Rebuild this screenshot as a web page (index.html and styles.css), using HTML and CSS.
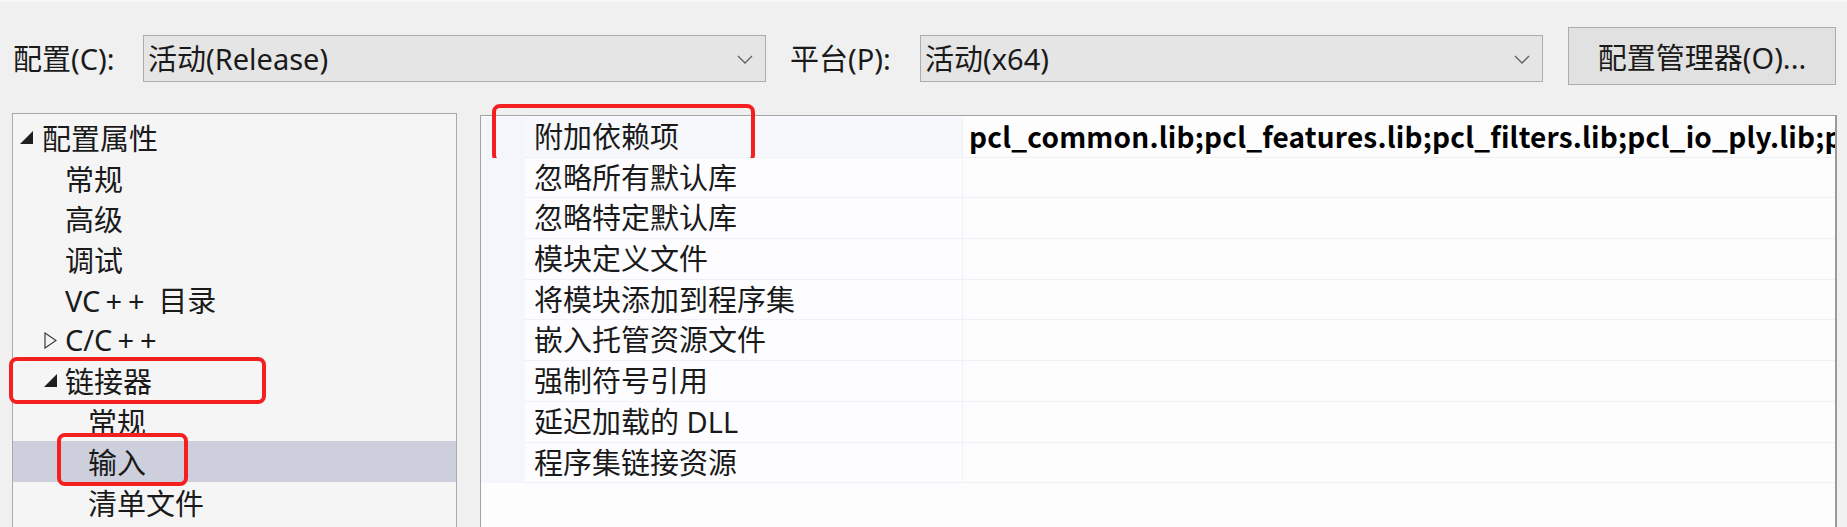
FILE: index.html
```html
<!DOCTYPE html>
<html lang="zh-CN">
<head>
<meta charset="utf-8">
<title>属性页</title>
<link rel="stylesheet" href="styles.css">
</head>
<body>
<div class="page">
  <div class="toolbar">
    <span class="lbl lbl-config">配置(C):</span>
    <div class="combo">
      <span class="combo-text">活动(Release)</span>
      <svg class="chev" width="16" height="9" viewBox="0 0 16 9"><path d="M1 1 L8 8 L15 1" fill="none" stroke="#5f5f5f" stroke-width="1.3"/></svg>
    </div>
    <span class="lbl lbl-platform">平台(P):</span>
    <div class="combo">
      <span class="combo-text">活动(x64)</span>
      <svg class="chev" width="16" height="9" viewBox="0 0 16 9"><path d="M1 1 L8 8 L15 1" fill="none" stroke="#5f5f5f" stroke-width="1.3"/></svg>
    </div>
    <button class="btn">配置管理器(O)...</button>
  </div>

  <div class="main">
    <div class="tree">
      <div class="node lvl0">
        <svg class="tri" width="13" height="13" viewBox="0 0 13 13"><path d="M0 13 L13 0 L13 13 Z" fill="#1e1e1e"/></svg>
        <span class="node-text">配置属性</span>
      </div>
      <div class="node lvl1"><span class="node-text">常规</span></div>
      <div class="node lvl1"><span class="node-text">高级</span></div>
      <div class="node lvl1"><span class="node-text">调试</span></div>
      <div class="node lvl1"><span class="node-text">VC<span class="pp">++</span> 目录</span></div>
      <div class="node lvl1">
        <svg class="tri tri-open" width="13" height="17" viewBox="0 0 13 17"><path d="M1 1 L12 8.5 L1 16 Z" fill="none" stroke="#3c3c3c" stroke-width="1.2"/></svg>
        <span class="node-text">C/C<span class="pp">++</span></span>
      </div>
      <div class="node lvl1 marked">
        <svg class="tri" width="13" height="13" viewBox="0 0 13 13"><path d="M0 13 L13 0 L13 13 Z" fill="#1e1e1e"/></svg>
        <span class="node-text">链接器</span>
        <span class="mark mark-linker"></span>
      </div>
      <div class="node lvl2"><span class="node-text">常规</span></div>
      <div class="node lvl2 selected marked">
        <span class="node-text">输入</span>
        <span class="mark mark-input"></span>
      </div>
      <div class="node lvl2"><span class="node-text">清单文件</span></div>
    </div>

    <div class="grid">
      <div class="prow first marked">
        <div class="gutter"></div>
        <div class="pname">附加依赖项</div>
        <div class="pval">pcl_common.lib;pcl_features.lib;pcl_filters.lib;pcl_io_ply.lib;pcl_io.lib;pcl_kdtree.lib;pcl_keypoints.lib</div>
        <span class="mark mark-dep"></span>
      </div>
      <div class="prow"><div class="gutter"></div><div class="pname">忽略所有默认库</div><div class="pval"></div></div>
      <div class="prow"><div class="gutter"></div><div class="pname">忽略特定默认库</div><div class="pval"></div></div>
      <div class="prow"><div class="gutter"></div><div class="pname">模块定义文件</div><div class="pval"></div></div>
      <div class="prow"><div class="gutter"></div><div class="pname">将模块添加到程序集</div><div class="pval"></div></div>
      <div class="prow"><div class="gutter"></div><div class="pname">嵌入托管资源文件</div><div class="pval"></div></div>
      <div class="prow"><div class="gutter"></div><div class="pname">强制符号引用</div><div class="pval"></div></div>
      <div class="prow"><div class="gutter"></div><div class="pname">延迟加载的 DLL</div><div class="pval"></div></div>
      <div class="prow"><div class="gutter"></div><div class="pname">程序集链接资源</div><div class="pval"></div></div>
    </div>
  </div>
</div>
</body>
</html>
```

FILE: styles.css
```css
html, body {
  margin: 0;
  padding: 0;
}

body {
  background: #f0f0f0;
  font-family: "Noto Sans", "Noto Sans CJK SC", sans-serif;
  color: #1a1a1a;
  width: 1847px;
  height: 527px;
  overflow: hidden;
}

.page {
  border-top: 2px solid #f8f8f8;
  height: 525px;
  overflow: hidden;
}

/* ---------- toolbar ---------- */
.toolbar {
  display: flex;
  align-items: flex-start;
  margin-top: 25px;
  padding-left: 13px;
  height: 58px;
}

.lbl {
  font-size: 29px;
  line-height: 47px;
  margin-top: 8px;
  white-space: nowrap;
}

.lbl-config {
  width: 130px;
}

.lbl-platform {
  width: 130px;
  margin-left: 24px;
}

.combo {
  box-sizing: border-box;
  width: 623px;
  height: 47px;
  margin-top: 8px;
  background: #e5e5e5;
  border: 1px solid #adadad;
  display: flex;
  align-items: center;
  justify-content: space-between;
  padding: 0 12px 0 4px;
}

.combo-text {
  font-size: 29px;
  line-height: 45px;
  white-space: nowrap;
}

.chev {
  display: block;
  margin-top: 1px;
}

.btn {
  box-sizing: border-box;
  margin-left: 25px;
  width: 268px;
  height: 58px;
  background: #e1e1e1;
  border: 1px solid #adadad;
  font-family: "Noto Sans", "Noto Sans CJK SC", sans-serif;
  font-size: 29px;
  color: #1a1a1a;
  padding: 0;
}

/* ---------- main ---------- */
.main {
  display: flex;
  align-items: flex-start;
  margin-top: 28px;
  padding-left: 12px;
}

/* tree */
.tree {
  box-sizing: border-box;
  width: 445px;
  height: 440px;
  background: #f5f5f5;
  border: 1px solid #a9a9a9;
  padding-top: 3px;
  position: relative;
}

.node {
  position: relative;
  height: 40.5px;
  display: flex;
  align-items: center;
  font-size: 29px;
  white-space: nowrap;
}

.node .tri {
  position: absolute;
  top: 14px;
}

.node .tri-open {
  top: 12px;
}

.lvl0 .tri { left: 7px; }
.lvl1 .tri { left: 31px; }

.lvl0 .node-text { margin-left: 29px; }
.lvl1 .node-text { margin-left: 52px; }
.lvl2 .node-text { margin-left: 75px; }

.pp {
  padding-left: 5px;
  letter-spacing: 6px;
}

.node.selected {
  background: #cdd0dc;
}

/* red annotation frames */
.mark {
  position: absolute;
  box-sizing: border-box;
  border: 4px solid #f41f1f;
  border-radius: 8px;
  pointer-events: none;
}

.mark-linker {
  left: -4px;
  top: -3px;
  width: 257px;
  height: 47px;
}

.mark-input {
  left: 44px;
  top: -8px;
  width: 131px;
  height: 53px;
}

.mark-dep {
  left: 11px;
  top: -13px;
  width: 263px;
  height: 59px;
}

/* property grid */
.grid {
  box-sizing: border-box;
  margin-left: 23px;
  margin-top: 2px;
  width: 1357px;
  height: 440px;
  background: #fdfdfd;
  border-left: 1px solid #a3a3a3;
  border-top: 1px solid #a3a3a3;
  border-right: 2px solid #9a9a9a;
  padding-top: 1px;
}

.prow {
  position: relative;
  display: grid;
  grid-template-columns: 44px 438px 1fr;
  height: 40.7px;
}

.gutter {
  background: #f4f6fb;
}

.pname,
.pval {
  box-sizing: border-box;
  border-bottom: 1px solid #eef1f7;
  font-size: 29px;
  line-height: 39px;
  white-space: nowrap;
  overflow: hidden;
}

.pname {
  padding-left: 9px;
  border-right: 1px solid #eef1f7;
  background: #fdfdff;
}

.prow.first .pname {
  background: #f6f8fc;
}

.pval {
  padding-left: 6px;
  font-family: "Noto Sans CJK SC", "Noto Sans", sans-serif;
  font-size: 28px;
  font-weight: 700;
  letter-spacing: 0.2px;
  color: #000;
}
```
